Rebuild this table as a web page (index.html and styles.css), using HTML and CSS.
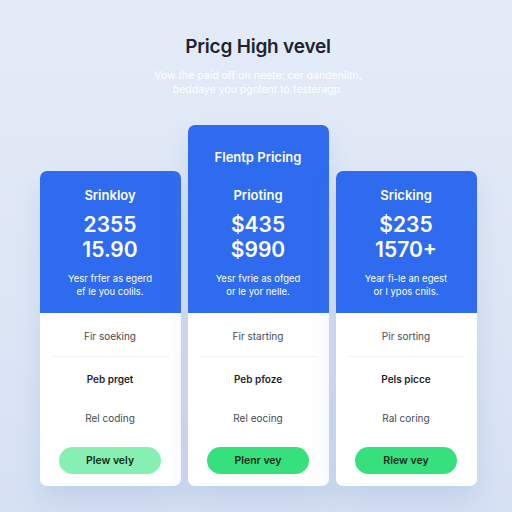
FILE: index.html
```html
<!DOCTYPE html>
<html>
<head>
<meta charset="utf-8">
<link rel="stylesheet" href="styles.css">
</head>
<body>
<div class="page">
  <h1 class="title">Pricg High vevel</h1>
  <p class="subtitle">Vow the paid off on neete: cer dandenilth,<br>beddaye you pgolent to festeragp.</p>
  <div class="plans">
    <div class="card">
      <div class="head">
        <div class="name">Srinkloy</div>
        <div class="price">2355<br>15.90</div>
        <div class="desc">Yesr frfer as egerd<br>ef le you colils.</div>
      </div>
      <div class="body">
        <div class="row first">Fir soeking</div>
        <div class="row bold">Peb prget</div>
        <div class="row third">Rel coding</div>
        <button class="btn light">Plew vely</button>
      </div>
    </div>
    <div class="card featured">
      <div class="head">
        <div class="badge">Flentp Pricing</div>
        <div class="name">Prioting</div>
        <div class="price">$435<br>$990</div>
        <div class="desc">Yesr fvrie as ofged<br>or le yor nelle.</div>
      </div>
      <div class="body">
        <div class="row first">Fir starting</div>
        <div class="row bold">Peb pfoze</div>
        <div class="row third">Rel eocing</div>
        <button class="btn">Plenr vey</button>
      </div>
    </div>
    <div class="card">
      <div class="head">
        <div class="name">Sricking</div>
        <div class="price">$235<br>1570+</div>
        <div class="desc">Year fi-le an egest<br>or l ypos cnils.</div>
      </div>
      <div class="body">
        <div class="row first">Pir sorting</div>
        <div class="row bold">Pels picce</div>
        <div class="row third">Ral coring</div>
        <button class="btn">Rlew vey</button>
      </div>
    </div>
  </div>
</div>
</body>
</html>
```

FILE: styles.css
```css
* { box-sizing: border-box; }
html, body { margin: 0; padding: 0; }
body {
  width: 512px;
  height: 512px;
  overflow: hidden;
  background: linear-gradient(180deg, #e4ebf8 0%, #dde6f5 60%, #d6e1f3 100%);
  font-family: Inter, "Open Sans", "Liberation Sans", sans-serif;
}
.page {
  display: flex;
  flex-direction: column;
  align-items: center;
  padding-top: 36px;
}
.title {
  margin: 0;
  font-size: 19px;
  line-height: 22px;
  font-weight: 600;
  color: #1d2331;
  letter-spacing: -0.2px;
  padding-left: 4px;
}
.subtitle {
  margin: 11px 0 0;
  font-size: 10.5px;
  line-height: 14px;
  color: #ffffff;
  text-align: center;
  padding-left: 4px;
}
.plans {
  display: flex;
  align-items: flex-end;
  gap: 7px;
  margin-top: 28px;
  padding-left: 4px;
}
.card {
  width: 141px;
  border-radius: 7px;
  overflow: hidden;
  background: #fff;
  box-shadow: 0 14px 24px rgba(120, 150, 200, 0.22);
}
.head {
  background: #2e6bef;
  color: #fff;
  text-align: center;
  padding: 16px 8px 15px;
}
.featured .head { padding-top: 24px; }
.badge {
  font-size: 13px;
  line-height: 16px;
  font-weight: 600;
  margin-bottom: 22px;
}
.name {
  font-size: 13px;
  line-height: 16px;
  font-weight: 600;
}
.price {
  margin-top: 9px;
  font-size: 21px;
  line-height: 25px;
  font-weight: 600;
}
.desc {
  margin-top: 10px;
  font-size: 9.5px;
  line-height: 13px;
}
.body {
  display: flex;
  flex-direction: column;
  align-items: center;
  padding: 16px 12px 12px;
  color: #2a2e36;
}
.row {
  font-size: 10px;
  line-height: 14px;
  text-align: center;
}
.row.first {
  align-self: stretch;
  padding-bottom: 13px;
  border-bottom: 1px solid #f0f2f6;
  color: #444a55;
}
.row.bold {
  margin-top: 15px;
  font-weight: 600;
  color: #1f232b;
}
.row.third {
  margin-top: 25px;
  color: #444a55;
}
.btn {
  margin-top: 22px;
  width: 102px;
  height: 27px;
  border: none;
  border-radius: 14px;
  background: #36e07d;
  color: #132b1c;
  font-family: inherit;
  font-size: 10.5px;
  font-weight: 600;
}
.btn.light { background: #86f0b2; }
```
